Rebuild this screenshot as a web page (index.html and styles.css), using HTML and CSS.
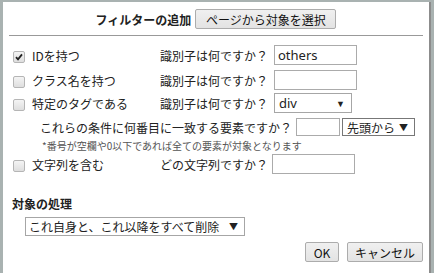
FILE: index.html
```html
<!DOCTYPE html>
<html lang="ja">
<head>
    <meta charset="utf-8">
    <title>フィルターの追加</title>
    <link rel="stylesheet" href="styles.css">
</head>
<body>
    <div class="dialog">
        <div class="head">
            <span class="title">フィルターの追加</span>
            <span class="btn pick">ページから対象を選択</span>
        </div>
        <hr>

        <div class="row r1">
            <span class="cb checked"><svg width="10" height="10" viewBox="0 0 10 10"><path d="M2 5.2 L4 7.4 L8 2.4" fill="none" stroke="#222" stroke-width="1.8"/></svg></span>
            <span class="label">IDを持つ</span>
            <span class="ask">識別子は何ですか？</span>
            <span class="field">others</span>
        </div>
        <div class="row r2">
            <span class="cb"></span>
            <span class="label">クラス名を持つ</span>
            <span class="ask">識別子は何ですか？</span>
            <span class="field"></span>
        </div>
        <div class="row r3">
            <span class="cb"></span>
            <span class="label">特定のタグである</span>
            <span class="ask">識別子は何ですか？</span>
            <span class="select tag">div<i>▼</i></span>
        </div>
        <div class="row r4">
            <span class="ask">これらの条件に何番目に一致する要素ですか？</span>
            <span class="field num"></span>
            <span class="select from">先頭から<i>▼</i></span>
        </div>
        <p class="note">*番号が空欄や0以下であれば全ての要素が対象となります</p>
        <div class="row r5">
            <span class="cb"></span>
            <span class="label">文字列を含む</span>
            <span class="ask">どの文字列ですか？</span>
            <span class="field"></span>
        </div>

        <h2>対象の処理</h2>
        <span class="select action">これ自身と、これ以降をすべて削除<i>▼</i></span>

        <div class="foot">
            <span class="btn ok">OK</span>
            <span class="btn cancel">キャンセル</span>
        </div>
    </div>
</body>
</html>
```

FILE: styles.css
```css
html,
body {
    margin: 0;
    padding: 0;
    background: #a9b2b1;
    font-family: "Noto Sans CJK JP", "Noto Sans", sans-serif;
    font-size: 12px;
    color: #222;
}
.dialog {
    margin: 2px 0 0 3px;
    width: 428px;
    height: 271px;
    box-sizing: border-box;
    background: #fff;
    border-right: 2px solid #8c8c8c;
    padding: 7px 6px 0 6px;
}
.head {
    display: flex;
    justify-content: center;
    align-items: center;
    gap: 4px;
    height: 20px;
}
.title {
    font-weight: bold;
    font-size: 12px;
}
.btn {
    display: inline-flex;
    align-items: center;
    justify-content: center;
    box-sizing: border-box;
    height: 20px;
    border: 1px solid #acacac;
    border-radius: 2px;
    background: linear-gradient(#f0f0f0, #e3e3e3);
    font-size: 12px;
    color: #111;
}
.pick {
    width: 141px;
}
hr {
    margin: 6px 0 0 0;
    border: 0;
    border-top: 1px solid #999;
    height: 0;
}
.row {
    display: flex;
    align-items: center;
    height: 20px;
    padding-left: 4px;
}
.r1 { margin-top: 9px; }
.r2 { margin-top: 5px; }
.r3 { margin-top: 3px; }
.r4 { margin-top: 5px; height: 18px; padding-left: 31px; }
.r5 { margin-top: 2px; }
.cb {
    display: inline-flex;
    align-items: center;
    justify-content: center;
    box-sizing: border-box;
    width: 12px;
    height: 12px;
    border: 1px solid #b5b5b5;
    border-radius: 2px;
    background: linear-gradient(#f4f4f4, #dedede);
    margin-top: 3px;
}
.label {
    margin-left: 7px;
    width: 128px;
}
.ask {
    white-space: nowrap;
}
.r1 .ask,
.r2 .ask,
.r3 .ask {
    width: 114px;
}
.r5 .ask {
    width: 112px;
}
.field {
    display: inline-flex;
    align-items: center;
    box-sizing: border-box;
    width: 83px;
    height: 20px;
    border: 1px solid #ababab;
    padding-left: 3px;
    font-family: "Noto Sans", sans-serif;
    font-size: 13px;
}
.select {
    display: inline-flex;
    align-items: center;
    justify-content: space-between;
    box-sizing: border-box;
    height: 20px;
    border: 1px solid #a6a6a6;
    padding: 0 6px 0 4px;
    font-size: 12px;
}
.select i {
    font-style: normal;
    font-size: 9px;
}
.tag {
    width: 78px;
    font-family: "Noto Sans", sans-serif;
    font-size: 13px;
}
.num {
    width: 44px;
    height: 18px;
    margin-left: 4px;
}
.from {
    width: 73px;
    height: 18px;
    margin-left: 2px;
    border-color: #777;
}
.note {
    margin: 3px 0 0 33px;
    font-size: 10px;
    color: #555;
    line-height: 13px;
}
.r5 .label {
    width: 128px;
}
h2 {
    margin: 22px 0 0 3px;
    font-size: 12px;
    font-weight: bold;
    line-height: 16px;
}
.action {
    margin: 5px 0 0 16px;
    width: 220px;
    height: 19px;
    padding-left: 3px;
}
.foot {
    display: flex;
    justify-content: flex-end;
    gap: 8px;
    margin-top: 6px;
}
.ok {
    width: 34px;
}
.cancel {
    width: 76px;
}
```
